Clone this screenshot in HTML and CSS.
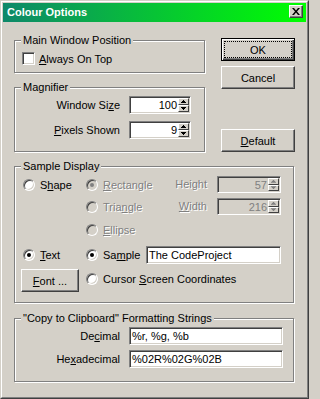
FILE: index.html
```html
<!DOCTYPE html>
<html>
<head>
<meta charset="utf-8">
<title>Colour Options</title>
<link rel="stylesheet" href="styles.css">
</head>
<body>
<div class="window">
  <div class="frame">
    <div class="titlebar">
      <span class="title">Colour Options</span>
      <span class="close"><svg width="8" height="7" viewBox="0 0 8 7"><path d="M0 0h2l2 2.5L6 0h2L5 3.5 8 7H6L4 4.5 2 7H0l3-3.5z" fill="#000"/></svg></span>
    </div>
    <div class="content">
      <div class="top">
        <div class="leftcol">
          <div class="group g-main">
            <div class="legend">Main Window Position</div>
            <div class="check-row"><span class="checkbox"></span><span><u>A</u>lways On Top</span></div>
          </div>
          <div class="group g-mag">
            <div class="legend">Magnifier</div>
            <div class="fgrid">
              <span class="flabel">Window Si<u>z</u>e</span>
              <div class="edit"><span class="val">100</span><span class="spinner"><span class="sb"><i class="up"></i></span><span class="sb"><i class="dn"></i></span></span></div>
              <span class="flabel"><u>P</u>ixels Shown</span>
              <div class="edit"><span class="val">9</span><span class="spinner"><span class="sb"><i class="up"></i></span><span class="sb"><i class="dn"></i></span></span></div>
            </div>
          </div>
        </div>
        <div class="buttons">
          <div class="btn def">OK</div>
          <div class="btn cancel">Cancel</div>
          <div class="btn dflt"><span><u>D</u>efault</span></div>
        </div>
      </div>

      <div class="group g-sample">
        <div class="legend">Sample Display</div>
        <div class="sgrid">
          <div class="ritem first gc1"><span class="radio"></span><span>S<u>h</u>ape</span></div>
          <div class="ritem gc2 disabled"><span class="radio dis on"></span><span><u>R</u>ectangle</span></div>
          <span class="slabel gc3 disabled">Height</span>
          <div class="edit short dis gc4"><span class="val">57</span><span class="spinner"><span class="sb"><i class="up"></i></span><span class="sb"><i class="dn"></i></span></span></div>

          <div class="ritem gc2 disabled"><span class="radio dis"></span><span>Tria<u>n</u>gle</span></div>
          <span class="slabel gc3 disabled"><u>W</u>idth</span>
          <div class="edit short dis gc4"><span class="val">216</span><span class="spinner"><span class="sb"><i class="up"></i></span><span class="sb"><i class="dn"></i></span></span></div>

          <div class="ritem gc2 disabled"><span class="radio dis"></span><span><u>E</u>llipse</span></div>

          <div class="ritem first tall gc1"><span class="radio on"></span><span><u>T</u>ext</span></div>
          <div class="ritem tall gc2"><span class="radio on"></span><span>Sa<u>m</u>ple</span></div>
          <div class="edit text gc34"><span class="txt">The CodeProject</span></div>

          <div class="btn font gc1"><span><u>F</u>ont ...</span></div>
          <div class="ritem cursor gc24"><span class="radio"></span><span>Cursor <u>S</u>creen Coordinates</span></div>
        </div>
      </div>

      <div class="group g-copy">
        <div class="legend">"Copy to Clipboard" Formatting Strings</div>
        <div class="cgrid">
          <span class="flabel">De<u>c</u>imal</span>
          <div class="edit text"><span class="txt">%r, %g, %b</span></div>
          <span class="flabel">He<u>x</u>adecimal</span>
          <div class="edit text"><span class="txt">%02R%02G%02B</span></div>
        </div>
      </div>
    </div>
  </div>
</div>
</body>
</html>
```

FILE: styles.css
```css
html, body {
  margin: 0;
  padding: 0;
  background: #d4d0c8;
}
body {
  font-family: "Liberation Sans", Arial, sans-serif;
  font-size: 11px;
  color: #000;
}
.window {
  width: 309px;
  height: 399px;
  box-sizing: border-box;
  border: 1px solid;
  border-color: #d4d0c8 #404040 #404040 #d4d0c8;
  background: #d4d0c8;
}
.frame {
  height: 100%;
  box-sizing: border-box;
  border: 1px solid;
  border-color: #fff #808080 #808080 #fff;
  padding: 1px;
}
.titlebar {
  height: 19px;
  display: flex;
  justify-content: space-between;
  align-items: flex-start;
  background: linear-gradient(90deg, #0e886a 0%, #00ff00 100%);
  padding: 0 3px 0 4px;
}
.title {
  color: #fff;
  font-weight: bold;
  line-height: 19px;
  white-space: nowrap;
}
.close {
  margin-top: 2px;
  width: 14px;
  height: 13px;
  box-sizing: border-box;
  background: #d4d0c8;
  border: 1px solid;
  border-color: #fff #404040 #404040 #fff;
  box-shadow: inset -1px -1px #808080;
  display: flex;
  align-items: center;
  justify-content: center;
}
.close svg { display: block; margin: 0 1px 1px 0; }

.content {
  padding: 15px 0 0 11px;
}
.top {
  display: flex;
  gap: 16px;
}
.leftcol {
  width: 191px;
  padding-top: 3px;
}

/* group boxes */
.group {
  box-sizing: border-box;
  border: 1px solid #808080;
  box-shadow: inset 1px 1px #fff, 1px 1px #fff;
  padding: 0 0 0 7px;
}
.legend {
  width: fit-content;
  height: 13px;
  line-height: 13px;
  margin: -7px 0 0 -1px;
  padding: 0 2px;
  background: #d4d0c8;
  white-space: nowrap;
}
.g-main { height: 33px; }
.g-mag { height: 65px; margin-top: 14px; }
.g-sample { width: 280px; height: 137px; margin-top: 14px; }
.g-copy { width: 280px; height: 64px; margin-top: 15px; }

.check-row {
  display: flex;
  align-items: center;
  gap: 4px;
  height: 13px;
  margin-top: 5px;
  white-space: nowrap;
}
.checkbox {
  width: 13px;
  height: 13px;
  box-sizing: border-box;
  background: #fff;
  border: 1px solid;
  border-color: #808080 #fff #fff #808080;
  box-shadow: inset 1px 1px #404040, inset -1px -1px #d4d0c8;
}

/* field grids */
.fgrid {
  display: grid;
  grid-template-columns: 98px 62px;
  column-gap: 9px;
  row-gap: 7px;
  grid-auto-rows: 18px;
  margin-top: 2px;
}
.cgrid {
  display: grid;
  grid-template-columns: 98px 154px;
  column-gap: 9px;
  row-gap: 5px;
  grid-auto-rows: 18px;
  margin-top: 2px;
}
.flabel {
  text-align: right;
  line-height: 18px;
  white-space: nowrap;
}

/* edits */
.edit {
  box-sizing: border-box;
  height: 18px;
  background: #fff;
  border: 1px solid;
  border-color: #808080 #fff #fff #808080;
  box-shadow: inset 1px 1px #404040, inset -1px -1px #d4d0c8;
  padding: 1px;
  display: flex;
  align-items: center;
  white-space: nowrap;
  overflow: hidden;
}
.edit.short { height: 17px; }
.edit.dis { background: #d4d0c8; color: #808080; }
.edit .val {
  flex: 1;
  text-align: right;
  padding-right: 1px;
}
.edit .txt {
  padding-left: 1px;
}
.spinner {
  display: flex;
  flex-direction: column;
  width: 11px;
  align-self: stretch;
}
.sb {
  flex: 1;
  box-sizing: border-box;
  border: 1px solid;
  border-color: #fff #404040 #404040 #fff;
  background: #d4d0c8;
  display: flex;
  align-items: center;
  justify-content: center;
}
.up, .dn {
  display: block;
  width: 5px;
  height: 3px;
  background: #000;
}
.up {
  clip-path: polygon(40% 0, 60% 0, 60% 33.3%, 80% 33.3%, 80% 66.7%, 100% 66.7%, 100% 100%, 0 100%, 0 66.7%, 20% 66.7%, 20% 33.3%, 40% 33.3%);
}
.dn {
  clip-path: polygon(0 0, 100% 0, 100% 33.3%, 80% 33.3%, 80% 66.7%, 60% 66.7%, 60% 100%, 40% 100%, 40% 66.7%, 20% 66.7%, 20% 33.3%, 0 33.3%);
}
.dis .up, .dis .dn { background: #808080; }

/* buttons */
.buttons {
  display: flex;
  flex-direction: column;
}
.btn {
  box-sizing: border-box;
  width: 74px;
  height: 23px;
  background: #d4d0c8;
  border: 1px solid;
  border-color: #fff #404040 #404040 #fff;
  box-shadow: inset -1px -1px #808080;
  display: flex;
  align-items: center;
  justify-content: center;
  white-space: nowrap;
}
.btn.def {
  margin-top: 1px;
  position: relative;
  border-color: #000;
  box-shadow: inset 1px 1px #fff, inset -1px -1px #404040, inset -2px -2px #808080;
}
.btn.def::after {
  content: "";
  position: absolute;
  left: 2px;
  top: 2px;
  right: 2px;
  bottom: 2px;
  border: 1px dotted #000;
}
.btn.cancel { margin-top: 5px; }
.btn.dflt { margin-top: 40px; }
.btn.font { width: 58px; margin-left: -1px; }

/* sample display grid */
.sgrid {
  display: grid;
  grid-template-columns: 64px 60px 71px 64px;
  grid-template-rows: 22px 23px 25px 23px 24px;
  margin-top: 3px;
  align-items: start;
}
.gc1 { grid-column: 1; }
.gc2 { grid-column: 2; }
.gc3 { grid-column: 3; }
.gc4 { grid-column: 4; }
.gc34 { grid-column: 3 / 5; }
.gc24 { grid-column: 2 / 5; }

.ritem {
  display: flex;
  align-items: center;
  gap: 5px;
  height: 17px;
  white-space: nowrap;
}
.ritem.first { margin-left: 1px; }
.ritem.tall { height: 18px; }
.ritem.cursor { height: 20px; }
.slabel {
  text-align: right;
  padding-right: 10px;
  line-height: 17px;
  white-space: nowrap;
}
.disabled {
  color: #808080;
  text-shadow: 1px 1px 0 #fff;
}

.radio {
  flex: none;
  position: relative;
  width: 12px;
  height: 12px;
  box-sizing: border-box;
  border-radius: 50%;
  background: #fff;
  border: 1px solid;
  border-color: #808080 #fff #fff #808080;
  box-shadow: inset 1px 1px #404040, inset -1px -1px #d4d0c8;
}
.radio.dis { background: #d4d0c8; }
.radio.on::after {
  content: "";
  position: absolute;
  left: 3px;
  top: 3px;
  width: 4px;
  height: 4px;
  border-radius: 50%;
  background: #000;
}
.radio.dis.on::after { background: #808080; }
```
